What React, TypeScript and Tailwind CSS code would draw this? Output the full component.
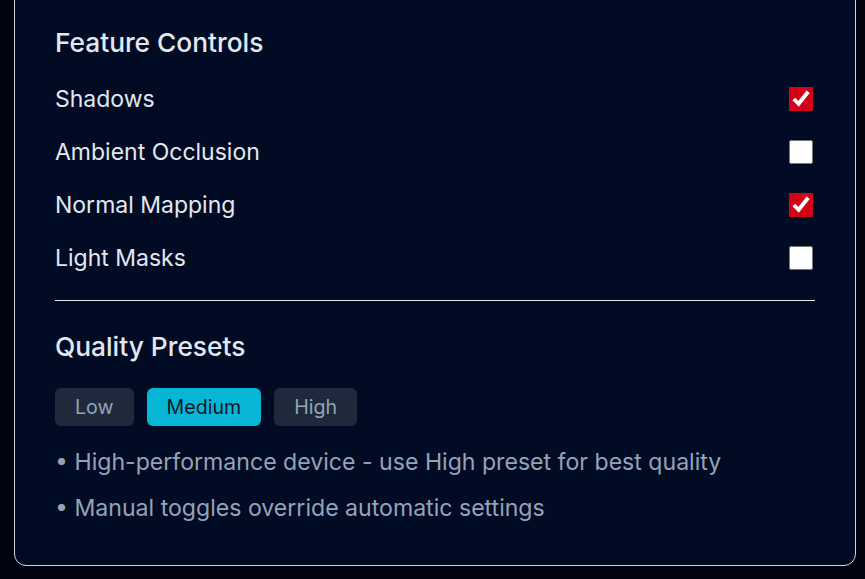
import { useState } from 'react';

const features = [
  { id: 'shadows', label: 'Shadows', on: true },
  { id: 'ao', label: 'Ambient Occlusion', on: false },
  { id: 'normal', label: 'Normal Mapping', on: true },
  { id: 'masks', label: 'Light Masks', on: false },
];

const presets = ['Low', 'Medium', 'High'];

export default function App() {
  const [toggles, setToggles] = useState<Record<string, boolean>>(
    Object.fromEntries(features.map((f) => [f.id, f.on]))
  );
  const [preset, setPreset] = useState('Medium');

  return (
    <div
      className="min-h-screen bg-[#01040f] overflow-hidden"
      style={{ fontFamily: 'Inter, "Noto Sans", sans-serif' }}
    >
      <div className="ml-[14px] mt-[-20px] w-[842px] rounded-xl border border-[#cbd5e1] bg-[#020b24] px-10 pt-10 pb-[43px]">
        {/* Feature toggles */}
        <h2 className="text-[26.3px] font-medium text-[#e2e8f0] leading-8 mt-[6px]">Feature Controls</h2>
        <div className="mt-[13px] flex flex-col">
          {features.map((f) => (
            <label key={f.id} className="flex items-center justify-between h-[53px]">
              <span className="text-[23px] leading-7 text-[#e2e8f0]">{f.label}</span>
              <input
                type="checkbox"
                checked={toggles[f.id]}
                onChange={() => setToggles({ ...toggles, [f.id]: !toggles[f.id] })}
                className="w-6 h-6 m-0 mr-[2px] accent-[#d40018]"
              />
            </label>
          ))}
        </div>

        <div className="mt-[16px] h-px bg-[#e2e8f0]" />

        {/* Presets */}
        <h2 className="mt-[30px] text-[26.3px] font-medium text-[#e2e8f0] leading-8">Quality Presets</h2>
        <div className="mt-[25px] flex gap-[13px]">
          {presets.map((p) => (
            <button
              key={p}
              onClick={() => setPreset(p)}
              className={
                preset === p
                  ? 'h-[38px] px-5 rounded-md bg-[#06b6d4] text-[#0f172a] text-[19.6px] leading-6'
                  : 'h-[38px] px-5 rounded-md bg-[#1e293b] text-[#94a3b8] text-[19.6px] leading-6'
              }
            >
              {p}
            </button>
          ))}
        </div>

        <ul className="mt-[22px] flex flex-col gap-[18px] text-[23.1px] leading-7 text-[#94a3b8]">
          <li>• High-performance device - use High preset for best quality</li>
          <li>• Manual toggles override automatic settings</li>
        </ul>
      </div>
    </div>
  );
}
